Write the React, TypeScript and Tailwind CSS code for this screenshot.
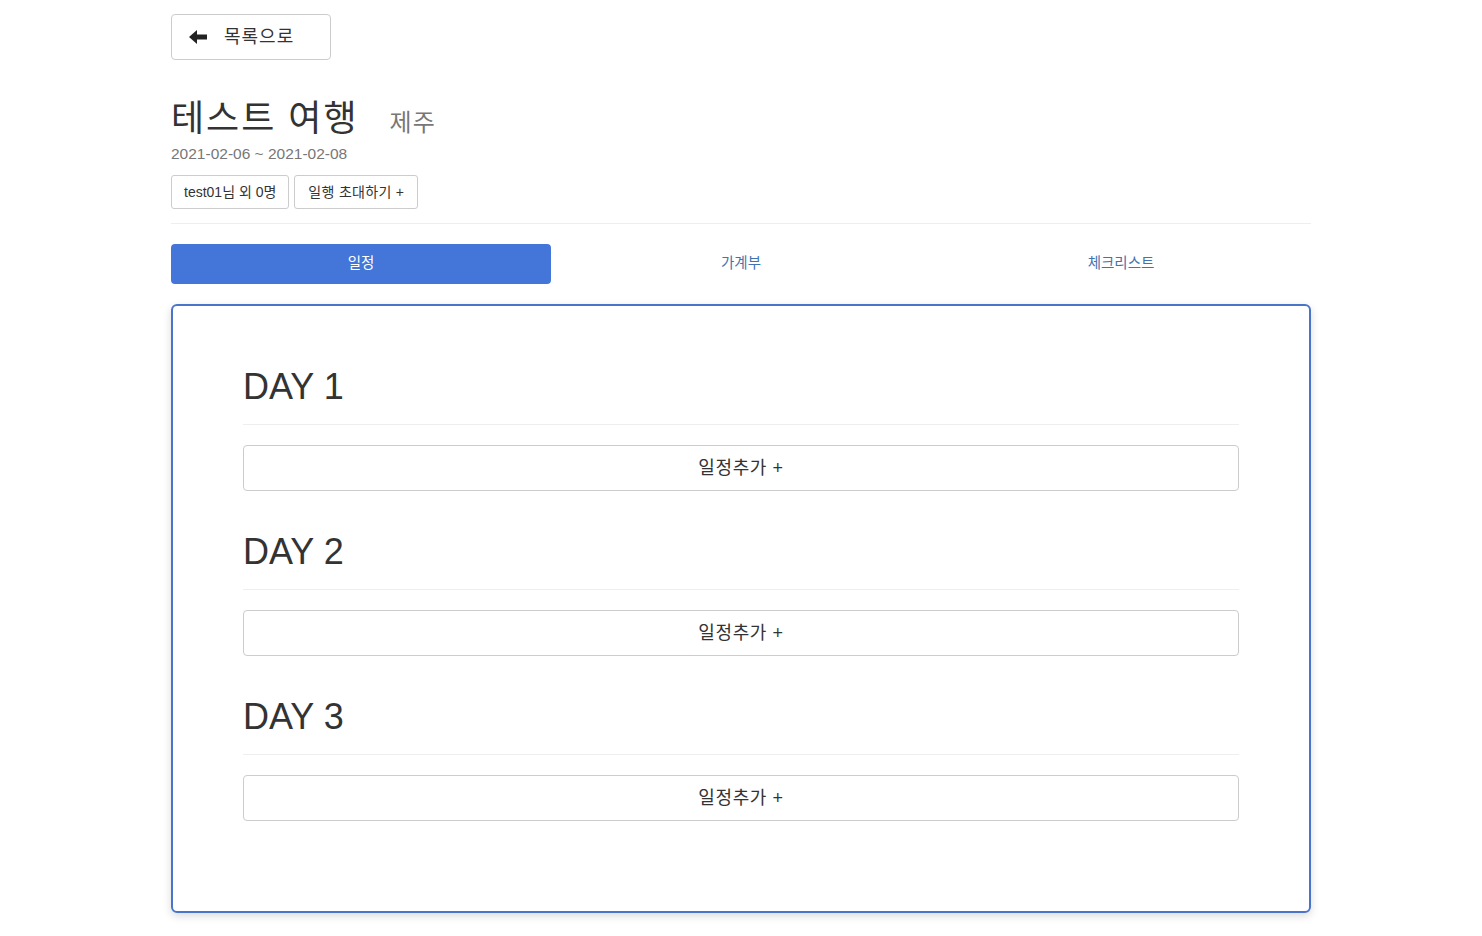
import React from 'react';

const days = [1, 2, 3];

const BackArrow = () => (
  <svg width="18" height="14" viewBox="0 0 18 14" aria-hidden="true">
    <path d="M0 7 L8 0 L8 4.5 L18 4.5 L18 9.5 L8 9.5 L8 14 Z" fill="#222" />
  </svg>
);

const App: React.FC = () => {
  return (
    <div className="min-h-screen bg-white text-[#333] font-['Liberation_Sans','Noto_Sans_CJK_KR',sans-serif]">
      <div className="w-[1140px] mx-auto pb-[24px]">
        <button className="mt-[14px] h-[46px] w-[160px] flex items-center pl-[17px] border border-[#ccc] rounded-[4px] bg-white">
          <BackArrow />
          <span className="ml-[17px] text-[18px] tracking-[1px] text-[#333] leading-none">목록으로</span>
        </button>

        <div className="mt-[39px] flex items-baseline">
          <h1 className="text-[36px] leading-[40px] tracking-[2px] font-normal">테스트 여행</h1>
          <span className="ml-[31px] text-[24px] tracking-[1px] text-[#777]">제주</span>
        </div>
        <div className="mt-[3px] text-[15.5px] leading-[20px] text-[#777]">2021-02-06 ~ 2021-02-08</div>
        <div className="mt-[11px] flex gap-[5px]">
          <button className="h-[34px] px-[12px] border border-[#ccc] rounded-[3px] text-[14px] text-[#333] bg-white">
            test01님 외 0명
          </button>
          <button className="h-[34px] px-[13px] border border-[#ccc] rounded-[3px] text-[14px] tracking-[0.3px] text-[#333] bg-white">
            일행 초대하기 +
          </button>
        </div>

        <div className="mt-[14px] border-t border-[#eee]" />

        <div className="mt-[20px] grid grid-cols-3 h-[40px] text-[14.5px]">
          <div className="bg-[#4475d9] rounded-[4px] text-white flex items-center justify-center">일정</div>
          <div className="flex items-center justify-center text-[#3f74b0]">가계부</div>
          <div className="flex items-center justify-center text-[#3f74b0]">체크리스트</div>
        </div>

        <div className="mt-[20px] border-2 border-[#4a74c9] rounded-[6px] shadow-[0_3px_8px_rgba(0,0,0,0.15)] px-[70px] pt-[61px] pb-[90px]">
          {days.map((d, i) => (
            <div key={d} className={i > 0 ? 'mt-[41px]' : ''}>
              <h2 className="text-[36px] leading-[40px] font-normal">DAY {d}</h2>
              <div className="mt-[17px] border-t border-[#eee]" />
              <button className="mt-[20px] w-full h-[46px] border border-[#ccc] rounded-[4px] bg-white text-[18px] tracking-[0.6px] text-[#333]">
                일정추가 +
              </button>
            </div>
          ))}
        </div>
      </div>
    </div>
  );
};

export default App;
